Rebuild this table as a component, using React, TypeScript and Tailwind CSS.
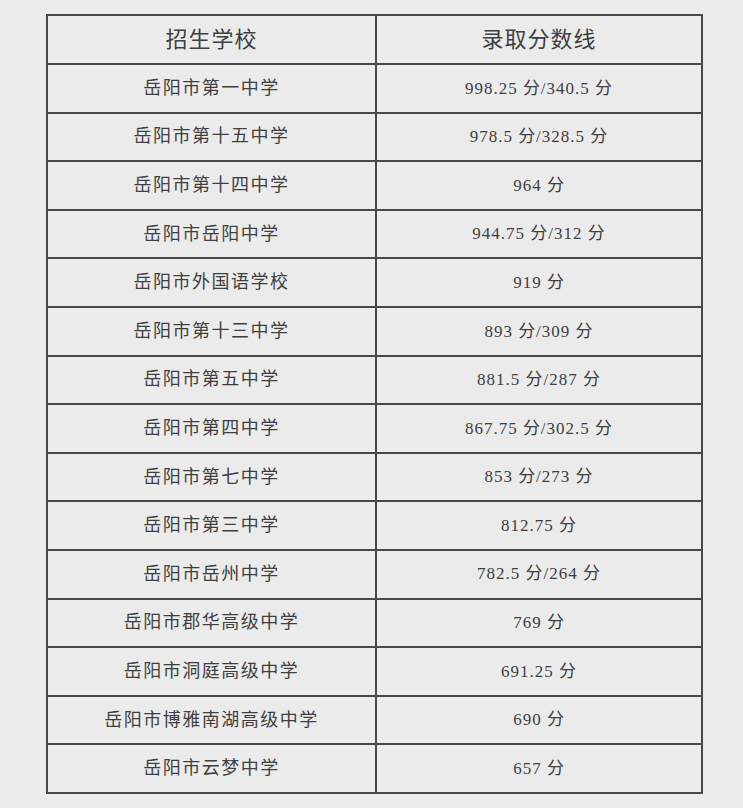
const rows: [string, string][] = [
  ['岳阳市第一中学', '998.25 分/340.5 分'],
  ['岳阳市第十五中学', '978.5 分/328.5 分'],
  ['岳阳市第十四中学', '964 分'],
  ['岳阳市岳阳中学', '944.75 分/312 分'],
  ['岳阳市外国语学校', '919 分'],
  ['岳阳市第十三中学', '893 分/309 分'],
  ['岳阳市第五中学', '881.5 分/287 分'],
  ['岳阳市第四中学', '867.75 分/302.5 分'],
  ['岳阳市第七中学', '853 分/273 分'],
  ['岳阳市第三中学', '812.75 分'],
  ['岳阳市岳州中学', '782.5 分/264 分'],
  ['岳阳市郡华高级中学', '769 分'],
  ['岳阳市洞庭高级中学', '691.25 分'],
  ['岳阳市博雅南湖高级中学', '690 分'],
  ['岳阳市云梦中学', '657 分'],
]

const font = "font-['Liberation_Serif','Noto_Sans_CJK_SC',serif]"

export default function App() {
  return (
    <div className={`min-h-[808px] w-[743px] bg-[#ebebeb] pl-[46px] pt-[14px] text-[#3f3f3f] ${font}`}>
      <table className="w-[657px] table-fixed border-collapse border-2 border-[#474747]">
        <colgroup>
          <col className="w-[329px]" />
          <col />
        </colgroup>
        <thead>
          <tr className="h-[49px]">
            <th className="border-2 border-[#474747] text-[22px] font-normal tracking-[1px]">招生学校</th>
            <th className="border-2 border-[#474747] text-[22px] font-normal tracking-[1px]">录取分数线</th>
          </tr>
        </thead>
        <tbody>
          {rows.map(([school, score]) => (
            <tr key={school} className="h-[48.6px]">
              <td className="border-2 border-[#474747] text-center text-[18px] tracking-[1.5px]">{school}</td>
              <td className="border-2 border-[#474747] text-center text-[17px] tracking-[1px]">{score}</td>
            </tr>
          ))}
        </tbody>
      </table>
    </div>
  )
}
